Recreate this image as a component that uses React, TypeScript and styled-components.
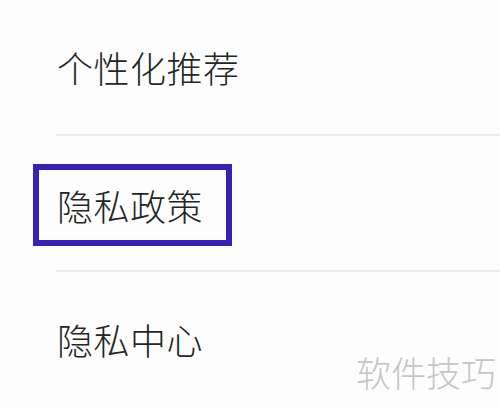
import { Fragment } from 'react';
import styled, { createGlobalStyle } from 'styled-components';

const GlobalStyle = createGlobalStyle`
  html, body {
    margin: 0;
    padding: 0;
    background: #fdfdfd;
  }
  body {
    font-family: "Noto Sans CJK SC", "Noto Sans", sans-serif;
  }
`;

const Page = styled.div`
  position: relative;
  width: 500px;
  height: 407px;
  overflow: hidden;
  background: #fdfdfd;
`;

const List = styled.ul`
  list-style: none;
  margin: 0;
  padding: 0;
  display: flex;
  flex-direction: column;
`;

const Item = styled.li`
  height: 134px;
  display: flex;
  align-items: center;
  padding-left: 57px;
`;

const Divider = styled.li`
  height: 2px;
  margin-left: 56px;
  background: #ececec;
`;

const Label = styled.span<{ $marked?: boolean }>`
  display: inline-block;
  font-size: 36px;
  font-weight: 300;
  line-height: 36px;
  color: #1f2725;
  letter-spacing: 0.5px;
  ${({ $marked }) =>
    $marked &&
    `
    margin-left: -24px;
    margin-top: 4px;
    padding: 17px 23px 17px 18px;
    border: 6px solid #3722b6;
  `}
`;

const Watermark = styled.div`
  position: absolute;
  right: 4px;
  bottom: 18px;
  font-size: 35px;
  font-weight: 300;
  line-height: 35px;
  color: #c6c6c6;
`;

const items = [
  { label: '个性化推荐' },
  { label: '隐私政策', marked: true },
  { label: '隐私中心' },
];

export default function App() {
  return (
    <Page>
      <GlobalStyle />
      <List>
        {items.map((item, i) => (
          <Fragment key={item.label}>
            {i > 0 && <Divider />}
            <Item>
              <Label $marked={item.marked}>{item.label}</Label>
            </Item>
          </Fragment>
        ))}
      </List>
      <Watermark>软件技巧</Watermark>
    </Page>
  );
}
